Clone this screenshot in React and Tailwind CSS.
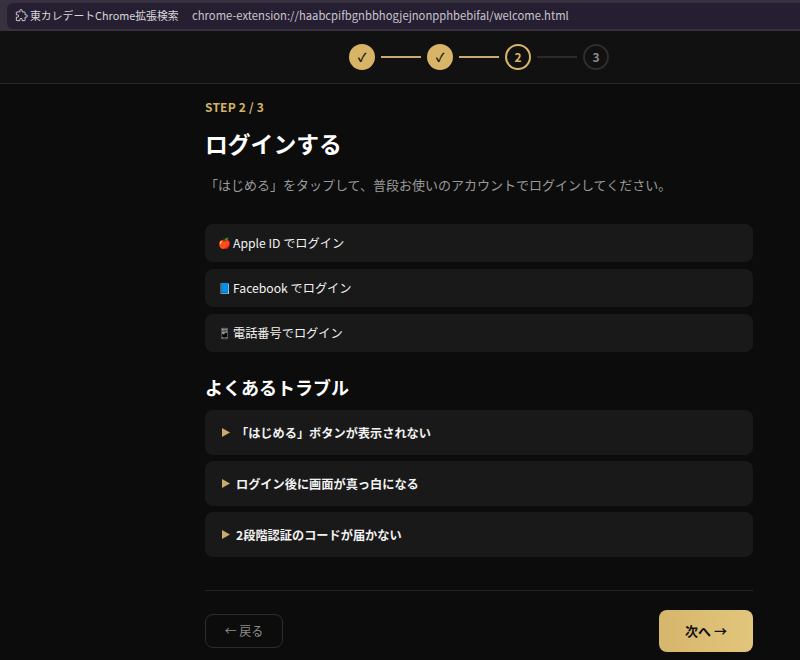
const font = { fontFamily: '"Noto Sans CJK JP", "Noto Sans", sans-serif' }

function StepDone() {
  return (
    <span className="flex h-[26px] w-[26px] items-center justify-center rounded-full bg-[#d8b566] text-xs font-bold text-[#111]">✓</span>
  )
}

function Tile({ icon, label }) {
  return (
    <div className="flex h-[38px] items-center gap-[2px] rounded-lg bg-[#191919] pl-[13px] text-[12.2px] text-[#f2f2f2]">
      {icon}
      <span>{label}</span>
    </div>
  )
}

function Trouble({ label }) {
  return (
    <div className="flex h-[45px] items-center gap-[6px] rounded-lg bg-[#191919] pl-[17px] pt-[2px] text-[12.2px] font-bold text-[#f2f2f2]">
      <svg width="8" height="9" viewBox="0 0 8 9" className="mb-[2px] shrink-0">
        <path d="M0 0 L8 4.5 L0 9 Z" fill="#c9aa6a" />
      </svg>
      <span>{label}</span>
    </div>
  )
}

export default function App() {
  return (
    <div className="flex h-[660px] w-[800px] flex-col overflow-hidden bg-[#0c0c0c]" style={font}>
      <div className="flex h-[31px] items-center bg-[#37303f] pl-[7px]">
        <div className="flex h-[26px] w-full items-center rounded-l-md bg-[#261f31] pl-[7px] text-[11.25px] text-[#d9d6dd]">
          <svg width="14" height="14" viewBox="0 0 24 24" fill="none" stroke="#d9d6dd" strokeWidth="1.6" strokeLinejoin="round" className="mr-[2px]">
            <path d="M10 3a2 2 0 0 1 4 0v2h4a1 1 0 0 1 1 1v4h2a2 2 0 0 1 0 4h-2v5a1 1 0 0 1-1 1h-4v-2a2 2 0 0 0-4 0v2H5a1 1 0 0 1-1-1v-5h2a2 2 0 0 0 0-4H4V6a1 1 0 0 1 1-1h5z" />
          </svg>
          <span className="w-[162px] shrink-0 whitespace-nowrap text-[10.85px]">東カレデートChrome拡張検索</span>
          <span className="whitespace-nowrap text-[#c9c5cf]">chrome-extension://haabcpifbgnbbhogjejnonpphbebifal/welcome.html</span>
        </div>
      </div>

      <div className="flex h-[53px] items-center justify-center gap-[6px] border-b border-[#272727] bg-[#111111] pl-[158px]">
        <StepDone />
        <span className="h-[2px] w-[40px] bg-[#c9ab72]" />
        <StepDone />
        <span className="h-[2px] w-[40px] bg-[#c9ab72]" />
        <span className="flex h-[26px] w-[26px] items-center justify-center rounded-full border-2 border-[#d8b566] text-xs font-bold text-[#d8b566]">2</span>
        <span className="h-[2px] w-[40px] bg-[#2a2a2a]" />
        <span className="flex h-[26px] w-[26px] items-center justify-center rounded-full border-2 border-[#2e2e2e] text-xs font-bold text-[#8a8a8a]">3</span>
      </div>

      <main className="ml-[205px] w-[548px] flex-1">
        <p className="mt-[14px] text-xs font-bold leading-[18px] tracking-[0.2px] text-[#d4b265]">STEP 2 / 3</p>
        <h1 className="mt-[11px] text-[22.8px] font-bold leading-[34px] text-white">ログインする</h1>
        <p className="mt-[13px] text-[13px] leading-[22px] text-[#9a9a9a]">「はじめる」をタップして、普段お使いのアカウントでログインしてください。</p>

        <div className="mt-[28px] flex flex-col gap-[7px]">
          <Tile icon={<span className="text-[10.5px]">🍎</span>} label="Apple ID でログイン" />
          <Tile icon={<span className="text-[10.5px]">📘</span>} label="Facebook でログイン" />
          <Tile icon={<span className="text-[10.5px] brightness-200 grayscale">📱</span>} label="電話番号でログイン" />
        </div>

        <h2 className="mt-[20px] text-lg font-bold leading-[30px] text-white">よくあるトラブル</h2>

        <div className="mt-[8px] flex flex-col gap-[6px]">
          <Trouble label="「はじめる」ボタンが表示されない" />
          <Trouble label="ログイン後に画面が真っ白になる" />
          <Trouble label="2段階認証のコードが届かない" />
        </div>

        <div className="mt-[33px] flex items-center justify-between border-t border-[#262626] pt-[19px]">
          <button className="h-[34px] w-[78px] rounded-lg border border-[#2c2c2c] text-xs text-[#8d8d8d]">← 戻る</button>
          <button className="h-[42px] w-[94px] rounded-lg bg-gradient-to-r from-[#d6b56c] to-[#e2c67c] text-[13px] font-bold text-[#111]">次へ →</button>
        </div>
      </main>
    </div>
  )
}
